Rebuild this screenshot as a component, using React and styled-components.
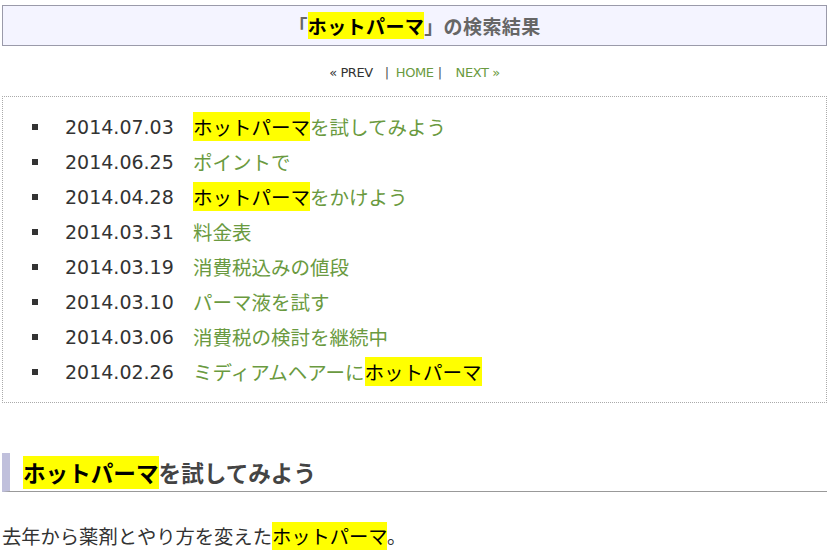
import styled, { createGlobalStyle } from "styled-components";

const GlobalStyle = createGlobalStyle`
  body {
    margin: 0;
    background: #fff;
    font-family: "DejaVu Sans", "Noto Sans CJK JP", sans-serif;
    color: #333;
  }
`;

const Page = styled.div`
  padding: 5px 2px 0 2px;
`;

const ResultHeader = styled.h1`
  margin: 0;
  height: 39px;
  border: 1px solid #9a9aaa;
  background: #f4f4ff;
  display: flex;
  align-items: center;
  justify-content: center;
  font-family: "Noto Sans CJK JP", sans-serif;
  font-size: 19px;
  font-weight: bold;
  color: #666;
  letter-spacing: 0.4px;
`;

const Mark = styled.span`
  background: #ffff00;
  color: #000;
`;

const Nav = styled.div`
  display: flex;
  justify-content: center;
  align-items: center;
  height: 50px;
  padding-top: 2px;
  box-sizing: border-box;
  font-family: "DejaVu Sans", sans-serif;
  font-size: 13px;
  color: #333;
  letter-spacing: -0.4px;
`;

const NavLink = styled.span`
  color: ${(p) => (p.$active ? "#6a9a40" : "#333")};
`;

const Sep = styled.span`
  margin: ${(p) => p.$margin};
  color: #555;
`;

const ResultBox = styled.div`
  border: 1px dotted #aaa;
  padding: 12px 0 13px 0;
`;

const List = styled.ul`
  margin: 0;
  padding: 0;
  list-style: none;
`;

const Item = styled.li`
  display: flex;
  align-items: center;
  height: 35px;
  padding-left: 29px;
  font-size: 19px;
  &::before {
    content: "";
    width: 6px;
    height: 6px;
    background: #333;
    margin-right: 27px;
  }
`;

const Date = styled.span`
  color: #333;
  width: 128px;
  flex-shrink: 0;
`;

const Title = styled.span`
  font-family: "Noto Sans CJK JP", sans-serif;
  font-size: 19.5px;
  color: #6a9a40;
  line-height: 35px;
`;

const PostTitle = styled.h2`
  margin: 50px 0 0 0;
  height: 38px;
  display: flex;
  align-items: center;
  border-left: 8px solid #c0c0dc;
  border-bottom: 1px solid #999;
  padding-left: 13px;
  font-family: "Noto Sans CJK JP", sans-serif;
  font-size: 22.6px;
  font-weight: bold;
  color: #444;
`;

const Body = styled.p`
  margin: 29px 0 0 0;
  font-family: "Noto Sans CJK JP", sans-serif;
  font-size: 19.3px;
  color: #333;
  line-height: 30px;
`;

const posts = [
  ["2014.07.03", [["ホットパーマ", true], ["を試してみよう"]]],
  ["2014.06.25", [["ポイントで"]]],
  ["2014.04.28", [["ホットパーマ", true], ["をかけよう"]]],
  ["2014.03.31", [["料金表"]]],
  ["2014.03.19", [["消費税込みの値段"]]],
  ["2014.03.10", [["パーマ液を試す"]]],
  ["2014.03.06", [["消費税の検討を継続中"]]],
  ["2014.02.26", [["ミディアムヘアーに"], ["ホットパーマ", true]]],
];

const App = () => {
  return (
    <Page>
      <GlobalStyle />
      <ResultHeader>
        「<Mark>ホットパーマ</Mark>」の検索結果
      </ResultHeader>
      <Nav>
        <NavLink>« PREV</NavLink>
        <Sep $margin="0 7px 0 12px">|</Sep>
        <NavLink $active>HOME</NavLink>
        <Sep $margin="0 14px 0 4px">|</Sep>
        <NavLink $active>NEXT »</NavLink>
      </Nav>
      <ResultBox>
        <List>
          {posts.map(([date, parts]) => (
            <Item key={date}>
              <Date>{date}</Date>
              <Title>
                {parts.map(([text, hit], i) =>
                  hit ? <Mark key={i}>{text}</Mark> : <span key={i}>{text}</span>
                )}
              </Title>
            </Item>
          ))}
        </List>
      </ResultBox>
      <PostTitle>
        <Mark>ホットパーマ</Mark>を試してみよう
      </PostTitle>
      <Body>
        去年から薬剤とやり方を変えた<Mark>ホットパーマ</Mark>。
      </Body>
    </Page>
  );
};

export default App;
